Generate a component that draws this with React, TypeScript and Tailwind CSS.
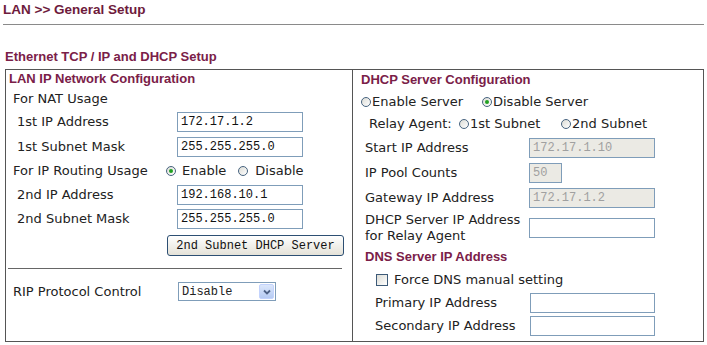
import React from 'react';

const body = { fontFamily: '"DejaVu Sans", Verdana, sans-serif' };
const head = { fontFamily: '"Liberation Sans", Arial, sans-serif' };
const mono = { fontFamily: '"Liberation Mono", "Courier New", monospace' };

function Radio({ checked }: { checked?: boolean }) {
  return (
    <span className="inline-flex w-[10px] h-[10px] shrink-0 rounded-full border border-[#47637f] bg-gradient-to-br from-[#dcdcd6] to-white items-center justify-center">
      {checked && <span className="w-[4px] h-[4px] rounded-full bg-[#21a121]" />}
    </span>
  );
}

function TextBox({ value, disabled, width = 'w-[126px]' }: { value?: string; disabled?: boolean; width?: string }) {
  return (
    <div
      className={`${width} h-[20px] shrink-0 border border-[#7f9db9] flex items-center px-[3px] text-[12px] ${disabled ? 'bg-[#ebeae4] text-[#a0a0a0]' : 'bg-white text-[#111]'}`}
      style={mono}
    >
      {value}
    </div>
  );
}

function Heading({ children }: { children: React.ReactNode }) {
  return (
    <div className="text-[13px] font-bold text-[#7a2048] whitespace-nowrap" style={head}>
      {children}
    </div>
  );
}

function LeftRow({ label, value, h = 'h-[24px]' }: { label: string; value: string; h?: string }) {
  return (
    <div className={`${h} flex items-center whitespace-nowrap`}>
      <div className="w-[171px] shrink-0 pl-[11px]">{label}</div>
      <TextBox value={value} />
    </div>
  );
}

function RightRow({ label, value, disabled, width, h = 'h-[25px]' }: { label: string; value?: string; disabled?: boolean; width?: string; h?: string }) {
  return (
    <div className={`${h} flex items-center whitespace-nowrap`}>
      <div className="w-[176px] shrink-0 pl-[12px]">{label}</div>
      <TextBox value={value} disabled={disabled} width={width} />
    </div>
  );
}

export default function App() {
  return (
    <div className="w-[707px] h-[345px] bg-white text-[13px] text-[#222] overflow-hidden" style={body}>
      <div className="mx-[3px] h-[25px] border-b border-[#8a8a8a] pt-[1px]">
        <div className="text-[13.5px] font-bold text-[#6e1b3c] leading-[18px]" style={head}>
          LAN &gt;&gt; General Setup
        </div>
      </div>

      <div className="pl-[5px] pt-[22px] h-[44px]">
        <Heading>Ethernet TCP / IP and DHCP Setup</Heading>
      </div>

      <div className="ml-[5px] w-[699px] h-[273px] border border-[#555] grid grid-cols-[347px_1fr]">
        {/* left panel */}
        <div className="border-r border-[#555]">
          <div className="h-[18px] flex items-center pl-[3px]">
            <Heading>LAN IP Network Configuration</Heading>
          </div>
          <div className="h-[22px] flex items-center pl-[7px]">For NAT Usage</div>
          <LeftRow label="1st IP Address" value="172.17.1.2" />
          <LeftRow label="1st Subnet Mask" value="255.255.255.0" h="h-[25px]" />
          <div className="h-[24px] flex items-center whitespace-nowrap">
            <div className="w-[160px] shrink-0 pl-[7px]">For IP Routing Usage</div>
            <Radio checked />
            <span className="ml-[6px]">Enable</span>
            <span className="ml-[12px] flex"><Radio /></span>
            <span className="ml-[7px]">Disable</span>
          </div>
          <LeftRow label="2nd IP Address" value="192.168.10.1" />
          <LeftRow label="2nd Subnet Mask" value="255.255.255.0" />
          <div className="h-[29px] flex items-center pl-[161px]">
            <div
              className="h-[21px] w-[177px] rounded-[3px] border border-[#2d4f73] bg-gradient-to-b from-white to-[#e4e2d8] flex items-center justify-center text-[12px] text-[#111] whitespace-nowrap"
              style={mono}
            >
              2nd Subnet DHCP Server
            </div>
          </div>
          <div className="mt-[8px] ml-[2px] mr-[10px] border-t border-[#666]" />
          <div className="mt-[13px] h-[19px] flex items-center whitespace-nowrap">
            <div className="w-[172px] shrink-0 pl-[7px]">RIP Protocol Control</div>
            <div className="w-[98px] h-[19px] text-[12px] border border-[#7f9db9] flex items-center justify-between pl-[3px] pr-[1px]" style={mono}>
              <span>Disable</span>
              <span className="w-[15px] h-[15px] rounded-[2px] bg-gradient-to-b from-[#dce7fb] to-[#b6cbf3] border border-[#c3d3fd] flex items-center justify-center">
                <svg width="8" height="6" viewBox="0 0 8 6">
                  <path d="M1 1.5 L4 4.5 L7 1.5" stroke="#4d6185" strokeWidth="1.8" fill="none" />
                </svg>
              </span>
            </div>
          </div>
        </div>

        {/* right panel */}
        <div>
          <div className="h-[20px] flex items-center pl-[8px]">
            <Heading>DHCP Server Configuration</Heading>
          </div>
          <div className="h-[23px] flex items-center pl-[8px] whitespace-nowrap">
            <Radio />
            <span className="w-[111px] shrink-0 pl-[1px]">Enable Server</span>
            <Radio checked />
            <span className="pl-[1px]">Disable Server</span>
          </div>
          <div className="h-[22px] flex items-center pl-[16px] whitespace-nowrap">
            <span className="w-[90px] shrink-0">Relay Agent:</span>
            <Radio />
            <span className="w-[92px] shrink-0 pl-[1px]">1st Subnet</span>
            <Radio />
            <span className="pl-[1px]">2nd Subnet</span>
          </div>
          <RightRow label="Start IP Address" value="172.17.1.10" disabled />
          <RightRow label="IP Pool Counts" value="50" disabled width="w-[33px]" />
          <RightRow label="Gateway IP Address" value="172.17.1.2" disabled />
          <div className="h-[36px] flex items-center whitespace-nowrap">
            <div className="w-[176px] shrink-0 pl-[12px] leading-[16px]">
              DHCP Server IP Address
              <br />
              for Relay Agent
            </div>
            <TextBox />
          </div>
          <div className="h-[22px] flex items-center pl-[12px]">
            <Heading>DNS Server IP Address</Heading>
          </div>
          <div className="h-[23px] flex items-center pl-[23px] whitespace-nowrap">
            <span className="w-[12px] h-[12px] shrink-0 border border-[#3d5a78] bg-gradient-to-br from-[#dcdcd6] to-white" />
            <span className="ml-[6px]">Force DNS manual setting</span>
          </div>
          <div className="h-[23px] flex items-center whitespace-nowrap">
            <div className="w-[177px] shrink-0 pl-[22px]">Primary IP Address</div>
            <TextBox width="w-[125px]" />
          </div>
          <div className="h-[24px] flex items-center whitespace-nowrap">
            <div className="w-[177px] shrink-0 pl-[22px]">Secondary IP Address</div>
            <TextBox width="w-[125px]" />
          </div>
        </div>
      </div>
    </div>
  );
}
